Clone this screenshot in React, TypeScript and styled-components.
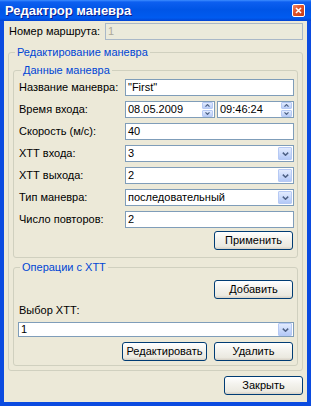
import styled, { createGlobalStyle } from "styled-components";

const GlobalStyle = createGlobalStyle`
	html, body {
		margin: 0;
		padding: 0;
		background: #ffffff;
	}
	body {
		font-family: "Liberation Sans", "DejaVu Sans", sans-serif;
		font-size: 11px;
		color: #000000;
	}
	* {
		box-sizing: border-box;
	}
`;

const StyledWindow = styled.div`
	width: 311px;
	height: 406px;
	display: flex;
	flex-direction: column;
	overflow: hidden;
`;

const TitleBar = styled.div`
	flex: none;
	height: 21px;
	display: flex;
	align-items: center;
	justify-content: space-between;
	padding: 0 6px 0 5px;
	background: linear-gradient(#3d8dff 0, #0d5ff0 2px, #0055e6 45%, #005bf0 85%, #0344d2 100%);
`;

const TitleText = styled.span`
	color: #ffffff;
	font-weight: bold;
	font-size: 13px;
	text-shadow: 1px 1px 0 #0a1c8a;
`;

const CloseButton = styled.div`
	width: 13px;
	height: 13px;
	border: 1px solid #ffffff;
	border-radius: 2px;
	background: linear-gradient(135deg, #ef8a6a 0%, #e2542a 40%, #c43d15 100%);
	display: grid;
	place-items: center;
`;

const Client = styled.div`
	flex: 1;
	display: flex;
	flex-direction: column;
	background: #ece9d8;
	border: 4px solid #0b4be0;
	border-top: none;
	padding: 2px 4px 0 4px;
`;

const TopRow = styled.div`
	display: flex;
	align-items: center;
	justify-content: space-between;
	height: 17px;
	padding-left: 1px;
`;

const Label = styled.span<{ $indent?: number }>`
	white-space: nowrap;
	line-height: 13px;
	margin-left: ${(p) => p.$indent ?? 0}px;
`;

const TextBox = styled.div<{ $width?: number; $disabled?: boolean }>`
	height: 17px;
	width: ${(p) => (p.$width ? `${p.$width}px` : "auto")};
	flex: ${(p) => (p.$width ? "none" : "1")};
	display: flex;
	align-items: center;
	padding: 0 2px;
	border: 1px solid ${(p) => (p.$disabled ? "#a9b8c8" : "#7f9db9")};
	background: ${(p) => (p.$disabled ? "#ebeadb" : "#ffffff")};
	color: ${(p) => (p.$disabled ? "#aca899" : "#000000")};
	white-space: nowrap;
	overflow: hidden;
`;

const BoxText = styled.span`
	flex: 1;
	line-height: 13px;
`;

const Group = styled.fieldset`
	margin: 0;
	min-width: 0;
	border: 1px solid #d0d0bf;
	border-radius: 3px;
`;

const Legend = styled.legend`
	padding: 0 2px;
	margin-left: 2px;
	line-height: 13px;
	color: #0046d5;
`;

const OuterGroup = styled(Group)`
	margin-top: 6px;
	padding: 5px 4px 4px 4px;
`;

const DataGroup = styled(Group)`
	padding: 2px 3px 7px 5px;
`;

const OpsGroup = styled(Group)`
	margin-top: 3px;
	padding: 6px 3px 4px 4px;
	display: flex;
	flex-direction: column;
`;

const FormGrid = styled.div`
	display: grid;
	grid-template-columns: 106px 1fr;
	grid-auto-rows: 17px;
	row-gap: 5px;
	align-items: center;
`;

const Pair = styled.div`
	display: flex;
	gap: 2px;
`;

const SpinColumn = styled.div`
	flex: none;
	width: 11px;
	height: 15px;
	display: flex;
	flex-direction: column;
	gap: 1px;
	margin-right: -1px;
`;

const SpinHalf = styled.div`
	flex: 1;
	display: grid;
	place-items: center;
	border: 1px solid #b6c9f4;
	border-radius: 1px;
	background: linear-gradient(#e2ebfe, #b9cdf8);
`;

const ComboButton = styled.div`
	flex: none;
	width: 14px;
	height: 13px;
	margin-right: -1px;
	display: grid;
	place-items: center;
	border: 1px solid #b6c9f4;
	border-radius: 1px;
	background: linear-gradient(#e2ebfe, #b4c9f7);
`;

const ButtonRow = styled.div<{ $top?: number; $right?: number }>`
	display: flex;
	justify-content: flex-end;
	gap: 7px;
	margin-top: ${(p) => p.$top ?? 0}px;
	padding-right: ${(p) => p.$right ?? 0}px;
`;

const Button = styled.div<{ $width: number }>`
	width: ${(p) => p.$width}px;
	height: 19px;
	display: grid;
	place-items: center;
	border: 1px solid #003c74;
	border-radius: 3px;
	background: linear-gradient(#ffffff 0%, #f4f3ee 40%, #ebe9e0 85%, #d6d0c5 100%);
	line-height: 13px;
	white-space: nowrap;
`;

const Chevron = ({ up }: { up?: boolean }) => (
	<svg width="7" height="4" viewBox="0 0 7 4">
		<path
			d={up ? "M0.8 3.4 L3.5 0.8 L6.2 3.4" : "M0.8 0.6 L3.5 3.2 L6.2 0.6"}
			fill="none"
			stroke="#4d6185"
			strokeWidth="1.5"
		/>
	</svg>
);

const SmallChevron = ({ up }: { up?: boolean }) => (
	<svg width="5" height="3" viewBox="0 0 5 3">
		<path
			d={up ? "M0.5 2.6 L2.5 0.6 L4.5 2.6" : "M0.5 0.4 L2.5 2.4 L4.5 0.4"}
			fill="none"
			stroke="#4d6185"
			strokeWidth="1.2"
		/>
	</svg>
);

const Combo = ({ value }: { value: string }) => (
	<TextBox>
		<BoxText>{value}</BoxText>
		<ComboButton>
			<Chevron />
		</ComboButton>
	</TextBox>
);

const Spin = ({ value, width }: { value: string; width?: number }) => (
	<TextBox $width={width}>
		<BoxText>{value}</BoxText>
		<SpinColumn>
			<SpinHalf>
				<SmallChevron up />
			</SpinHalf>
			<SpinHalf>
				<SmallChevron />
			</SpinHalf>
		</SpinColumn>
	</TextBox>
);

const App = () => {
	return (
		<>
			<GlobalStyle />
			<StyledWindow>
				<TitleBar>
					<TitleText>Редактрор маневра</TitleText>
					<CloseButton>
						<svg width="7" height="7" viewBox="0 0 7 7">
							<path d="M1 1 L6 6 M6 1 L1 6" stroke="#ffffff" strokeWidth="1.6" />
						</svg>
					</CloseButton>
				</TitleBar>
				<Client>
					<TopRow>
						<Label>Номер маршрута:</Label>
						<TextBox $width={198} $disabled>
							<BoxText>1</BoxText>
						</TextBox>
					</TopRow>
					<OuterGroup>
						<Legend>Редактирование маневра</Legend>
						<DataGroup>
							<Legend>Данные маневра</Legend>
							<FormGrid>
								<Label>Название маневра:</Label>
								<TextBox>
									<BoxText>"First"</BoxText>
								</TextBox>
								<Label>Время входа:</Label>
								<Pair>
									<Spin value="08.05.2009" width={90} />
									<Spin value="09:46:24" />
								</Pair>
								<Label>Скорость (м/с):</Label>
								<TextBox>
									<BoxText>40</BoxText>
								</TextBox>
								<Label>ХТТ входа:</Label>
								<Combo value="3" />
								<Label>ХТТ выхода:</Label>
								<Combo value="2" />
								<Label>Тип маневра:</Label>
								<Combo value="последовательный" />
								<Label>Число повторов:</Label>
								<TextBox>
									<BoxText>2</BoxText>
								</TextBox>
							</FormGrid>
							<ButtonRow $top={3} $right={1}>
								<Button $width={79}>Применить</Button>
							</ButtonRow>
						</DataGroup>
						<OpsGroup>
							<Legend>Операции с ХТТ</Legend>
							<ButtonRow $right={1}>
								<Button $width={79}>Добавить</Button>
							</ButtonRow>
							<Label $indent={1} style={{ marginTop: 5, marginBottom: 5 }}>
								Выбор ХТТ:
							</Label>
							<Combo value="1" />
							<ButtonRow $top={5} $right={1}>
								<Button $width={85}>Редактировать</Button>
								<Button $width={79}>Удалить</Button>
							</ButtonRow>
						</OpsGroup>
					</OuterGroup>
					<ButtonRow $top={5}>
						<Button $width={79}>Закрыть</Button>
					</ButtonRow>
				</Client>
			</StyledWindow>
		</>
	);
};

export default App;
